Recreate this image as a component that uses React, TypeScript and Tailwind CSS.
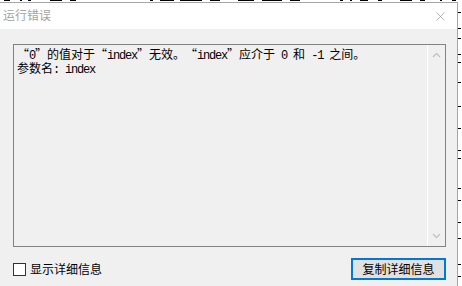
import { X } from 'lucide-react'

const topMarks = [
  [4, 6], [20, 2], [28, 3], [50, 12], [70, 6], [150, 3], [160, 14], [180, 22], [210, 10], [238, 16], [262, 20], [290, 10],
  [340, 3], [350, 2], [360, 8], [378, 4], [400, 12], [420, 5], [440, 2], [452, 4],
]

const sideMarks = [10, 26, 36, 52, 60, 80, 104, 126, 148, 156, 186, 198, 220, 236, 262, 274]

const mono = { fontFamily: '"Liberation Mono", monospace' }

function Open() {
  return <span className="inline-block w-[12px] text-right">“</span>
}

function Close() {
  return <span className="inline-block w-[12px] text-left">”</span>
}

function Latin({ children }: { children: string }) {
  return <span className="tracking-[-1.2px] whitespace-pre" style={mono}>{children}</span>
}

export default function App() {
  return (
    <div className="w-[462px] h-[286px] bg-white overflow-hidden flex flex-col" style={{ fontFamily: '"Noto Sans CJK SC", "Liberation Sans", sans-serif' }}>
      {/* background window peeking above */}
      <div className="h-[2px] relative shrink-0">
        {topMarks.map(([x, w], i) => (
          <div key={i} className="absolute top-0 h-[1px] bg-black" style={{ left: x, width: w }} />
        ))}
      </div>

      <div className="flex flex-1">
        <div className="w-[458px] flex flex-col border-t border-r border-[#a6a6a6]">
          {/* title bar */}
          <div className="h-[26px] bg-white flex items-center justify-between pl-[3px] pr-[9px]">
            <span className="text-[12px] leading-none text-[#a3a3a3] -mt-[2px]">运行错误</span>
            <X size={15} strokeWidth={1} className="text-[#8a8a8a]" />
          </div>

          {/* body */}
          <div className="flex-1 bg-[#f0f0f0] flex flex-col pl-[13px] pr-[11px] pt-[15px]">
            <div className="h-[203px] border border-[#828282] flex">
              <div className="flex-1 pl-[3px] pt-[3px] text-[12px] leading-[12px] text-black">
                <div className="whitespace-nowrap">
                  <Open /><Latin>0</Latin><Close />的值对于<Open /><Latin>index</Latin><Close />无效。<Open /><Latin>index</Latin><Close />应介于<Latin> 0 </Latin>和<Latin> -1 </Latin>之间。
                </div>
                <div className="whitespace-nowrap">
                  参数名<Latin>: index</Latin>
                </div>
              </div>
              <div className="w-[18px] border-l border-white flex flex-col items-center justify-between py-[7px]">
                <svg width="9" height="6" viewBox="0 0 9 6"><path d="M1 5 L4.5 1.5 L8 5" fill="none" stroke="#c2c2c2" strokeWidth="1.3" /></svg>
                <svg width="9" height="6" viewBox="0 0 9 6"><path d="M1 1 L4.5 4.5 L8 1" fill="none" stroke="#c2c2c2" strokeWidth="1.3" /></svg>
              </div>
            </div>

            <div className="flex items-center justify-between mt-[11px]">
              <label className="flex items-center gap-[4px]">
                <span className="w-[13px] h-[13px] border border-[#333333] bg-white" />
                <span className="text-[12px] leading-none text-black">显示详细信息</span>
              </label>
              <button className="w-[95px] h-[22px] border-2 border-[#0078d7] bg-[#e1e1e1] text-[12px] leading-none text-black">
                复制详细信息
              </button>
            </div>
          </div>
        </div>

        {/* background window peeking at the right */}
        <div className="w-[3px] relative">
          {sideMarks.map((y, i) => (
            <div key={i} className="absolute left-0 w-[3px] h-[1px] bg-black" style={{ top: y }} />
          ))}
        </div>
      </div>
    </div>
  )
}
